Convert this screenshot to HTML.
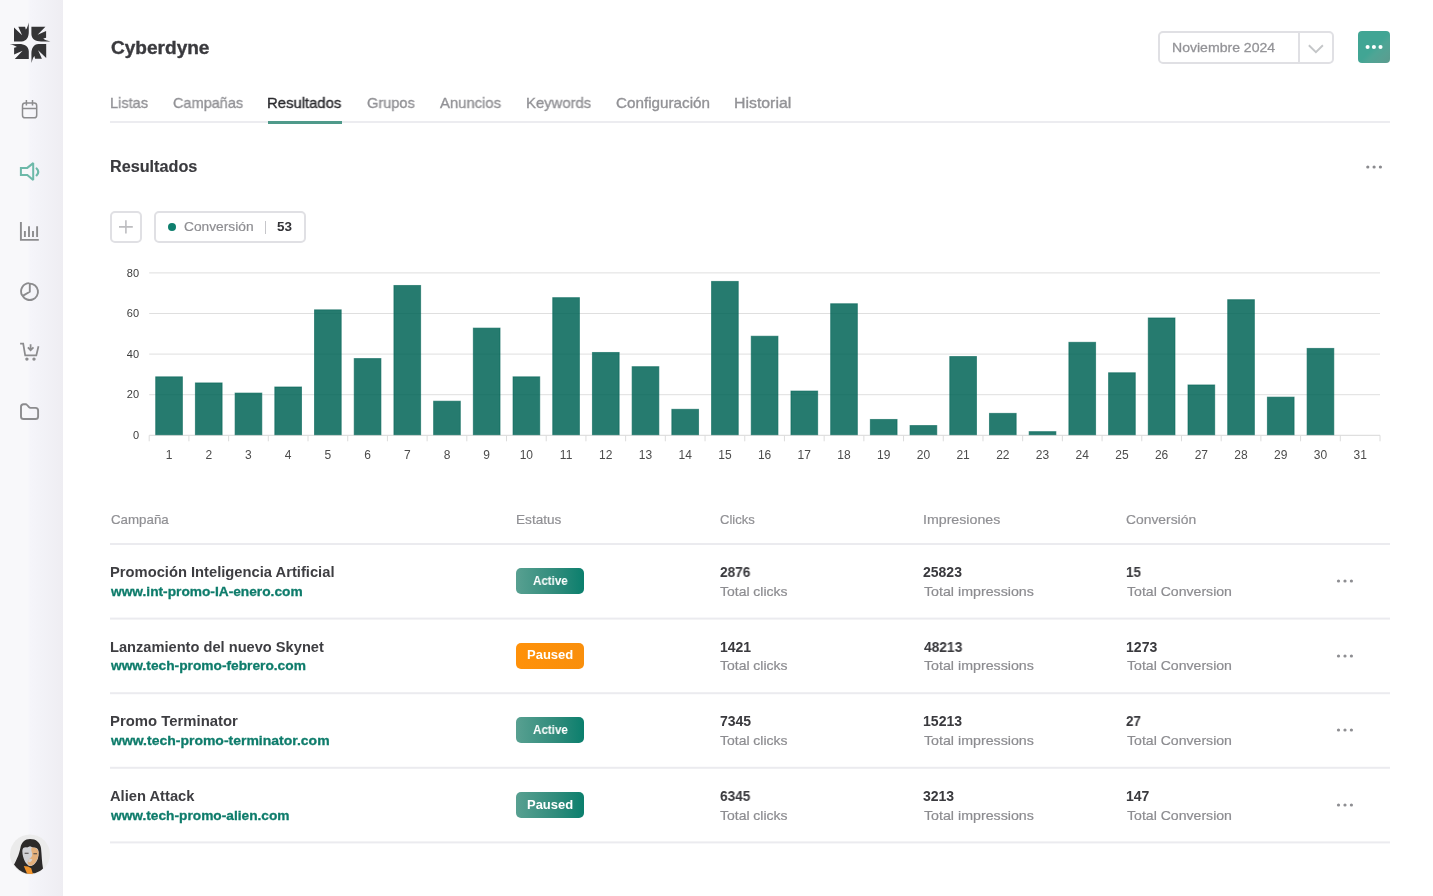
<!DOCTYPE html>
<html lang="es"><head><meta charset="utf-8"><title>Cyberdyne - Resultados</title>
<style>
html,body{margin:0;padding:0}
body{width:1433px;height:896px;position:relative;overflow:hidden;background:#fff;font-family:"Liberation Sans", sans-serif;}
.t{position:absolute;margin:0;white-space:nowrap;line-height:1;will-change:transform;transform-origin:0 0;text-decoration:none;}
.abs{position:absolute}
.side{position:absolute;left:0;top:0;width:63px;height:896px;background:linear-gradient(90deg,#f8f8fa 0,#f8f8fa 28px,#f5f5fa 30px,#eeedf2 63px);}
.hl{position:absolute;left:110px;width:1280px;height:2px;background:#ebebef}
.tabline{position:absolute;left:110px;top:121px;width:1280px;height:2px;background:#ececf0}
.tabact{position:absolute;left:268px;top:121px;width:74px;height:3px;background:#4f9a8a}
.box{position:absolute;box-sizing:border-box;border:2px solid #e0e0e4;border-radius:5px;background:#fff}
.hb{-webkit-text-stroke:0.35px #3a3a3e}
.hb2{-webkit-text-stroke:0.15px #3a3a3e}
.sb{-webkit-text-stroke:0.3px #98989c}
.rg{-webkit-text-stroke:0.2px}
.tb{-webkit-text-stroke:0.35px}
.ub{-webkit-text-stroke:0.3px #0e7c6b}
.badge{position:absolute;left:516px;width:68px;height:26px;border-radius:5px}
.badge.g{background:linear-gradient(90deg,#58a091 0%,#2f8b7b 60%,#0b7f6d 100%)}
.badge.o{background:linear-gradient(90deg,#ff9109 0%,#f98f0c 100%)}
.gbtn{position:absolute;left:1358px;top:31px;width:32px;height:32px;border-radius:4px;background:linear-gradient(135deg,#41a594 0%,#41a594 50%,#4ea595 62%,#57a092 82%,#5a9b8d 100%)}
.chart{position:absolute;left:0;top:0;will-change:transform}
</style></head><body>
<aside class="sidebar">
<div class="side"></div>
<svg class="abs" style="left:0;top:0" width="63" height="896" viewBox="0 0 63 896">
<!-- logo -->
<g transform="translate(30.1,42.8)" fill="#343436">
<g id="q"><path d="M-16.1,-15.3 L-16.1,-1.3 L-8.5,-1.3 C-3.5,-1.6 -1.3,-5.5 -1.3,-11 L-1.4,-20.3 C-2.2,-16.8 -3,-14.6 -4.3,-13.2 L-5,-16 L-11.8,-16 L-8,-7.5 Z"/></g>
<path transform="rotate(90)" d="M-16.1,-15.3 L-16.1,-1.3 L-8.5,-1.3 C-3.5,-1.6 -1.3,-5.5 -1.3,-11 L-1.4,-20.3 C-2.2,-16.8 -3,-14.6 -4.3,-13.2 L-5,-16 L-11.8,-16 L-8,-7.5 Z"/>
<path transform="rotate(180)" d="M-16.1,-15.3 L-16.1,-1.3 L-8.5,-1.3 C-3.5,-1.6 -1.3,-5.5 -1.3,-11 L-1.4,-20.3 C-2.2,-16.8 -3,-14.6 -4.3,-13.2 L-5,-16 L-11.8,-16 L-8,-7.5 Z"/>
<path transform="rotate(270)" d="M-16.1,-15.3 L-16.1,-1.3 L-8.5,-1.3 C-3.5,-1.6 -1.3,-5.5 -1.3,-11 L-1.4,-20.3 C-2.2,-16.8 -3,-14.6 -4.3,-13.2 L-5,-16 L-11.8,-16 L-8,-7.5 Z"/>
</g>
<!-- calendar -->
<g fill="none" stroke="#8c8c8e" stroke-width="1.5">
<rect x="22.5" y="103.1" width="14.2" height="14.7" rx="2.6"/>
<path d="M22.5 108.4 H36.7 M26.4 100 V105.4 M32.5 100 V105.4"/>
</g>
<!-- speaker -->
<g fill="none" stroke="#6db9a9" stroke-width="2" stroke-linejoin="round">
<path d="M20.9 167.9 H27.3 L33.2 163.1 V180 L27.3 174.9 H20.9 Z" stroke-linejoin="miter" stroke-miterlimit="2"/>
<path d="M36.6 168.5 C38.8 170.4 38.8 173.5 36.6 175.3" stroke-linecap="round" stroke-width="2.2"/>
</g>
<!-- chart icon -->
<g fill="none" stroke="#8c8c8e" stroke-width="1.9">
<path d="M20.9 222.1 V239.9 H38.8"/>
<path d="M24.9 231 V236.9 M29 226.3 V236.9 M33 231 V236.9 M37.1 226.3 V236.9"/>
</g>
<!-- pie -->
<g fill="none" stroke="#8c8c8e" stroke-width="1.9">
<path d="M29.8 283.6 A8.2 8.2 0 1 1 22.7 295.9 L29.8 291.8 Z" stroke-linejoin="round"/>
<path d="M22.2 295.4 A8.2 8.2 0 0 1 29.3 283.1" />
</g>
<!-- cart -->
<g fill="none" stroke="#8c8c8e" stroke-width="1.75">
<path d="M20.1 343.5 H23.2 L25.2 355.4 H36.3 L38.5 346.3"/>
<path d="M30.6 344.3 V350 M27.9 347.4 L30.6 350.2 L33.5 347.4"/>
</g>
<circle cx="26.9" cy="359.1" r="1.7" fill="#8c8c8e"/><circle cx="34" cy="359.1" r="1.7" fill="#8c8c8e"/>
<!-- folder -->
<path d="M23.6 404.2 H25.6 C26.3 404.2 26.7 404.5 27.1 405 L29 407.2 C29.4 407.7 29.8 407.9 30.5 407.9 H35.5 C37.1 407.9 38.1 408.9 38.1 410.5 V416.4 C38.1 418 37.1 419 35.5 419 H23.6 C22 419 21 418 21 416.4 V406.8 C21 405.2 22 404.2 23.6 404.2 Z" fill="none" stroke="#8c8c8e" stroke-width="1.9"/>
<!-- avatar -->
<defs><clipPath id="av"><circle cx="30" cy="854.4" r="20"/></clipPath></defs>
<g clip-path="url(#av)">
<rect x="9" y="833" width="42" height="43" fill="#ebebeb"/>
<path d="M30 839.1 C25 839.1 21.6 842 20.4 848 C19 855 16 861 14 864.6 C17 869 21 872 26 873.6 L35 873.2 C39 871.6 41.5 870 43 868.4 C41.8 862 41.8 855 41 848 C40.2 842.5 36 839.1 30 839.1 Z" fill="#2c2a29"/>
<path d="M22.3 851 C22.5 848 24 847 27 847.4 L30 846.2 L33 847.6 C36 847.2 38.5 848.6 38.7 852 C38.9 857 37.5 861 35 863.5 C33 865.5 31 866.3 29.5 866 C26.5 865 22.5 859 22.3 851 Z" fill="#d0d1d5"/>
<path d="M31.5 847.6 C34.5 847 38 848.4 38.5 852 C38.8 857 37 861 34.5 863.5 C33 865 31 866 29.8 865.6 C28 864.5 27 862.5 28 860.5 C29.5 858 32.5 857.5 32.2 854.5 C32 852 30.8 850 31.5 847.6 Z" fill="#e9a45e" opacity="0.75"/>
<path d="M28.5 859.5 C30 858.4 31.5 858.6 32.3 859.6 C31.6 861.6 29.8 862.6 28.3 862 Z" fill="#d6d3d2"/>
<path d="M24.6 853.3 H28.6 M33.4 853.7 H37" stroke="#4a4543" stroke-width="1.1"/>
<path d="M23.8 866 L27 873.6 L33 874.2 L31.2 868.3 L28 866.6 Z" fill="#f0932b"/>
</g>
</svg>

</aside>
<main>
<header class="page-header">
<h1 class="t hb" style="left:111px;top:40.30px;font-size:17.6px;font-weight:700;color:#3a3a3e;transform:scaleX(1.0829)">Cyberdyne</h1>
<div class="date-select">
<div class="box" style="left:1158px;top:31px;width:176px;height:33px"></div>
<div class="abs" style="left:1298px;top:32px;width:2px;height:31px;background:#e0e0e4"></div>
<svg class="abs" style="left:1306px;top:40px" width="20" height="16"><path d="M2.85 5.3 L9.9 12.1 L16.9 5.3" fill="none" stroke="#c4c6c8" stroke-width="1.9"/></svg>
<span class="t sb" style="left:1172px;top:40.60px;font-size:13px;font-weight:400;color:#909094;transform:scaleX(1.0810)">Noviembre 2024</span>
</div>
<button class="gbtn" style="border:0;padding:0"></button>
<svg class="abs" style="left:1364px;top:42px" width="20" height="10"><circle cx="3.6" cy="5" r="2.05" fill="#fff"/><circle cx="9.9" cy="5" r="2.05" fill="#fff"/><circle cx="16.5" cy="5" r="2.05" fill="#fff"/></svg>
</header>
<nav class="tabs">
<div class="tabline"></div><div class="tabact"></div>
<a class="t tb" style="left:110px;top:95.00px;font-size:15px;font-weight:400;color:#929296;transform:scaleX(0.9707)">Listas</a><a class="t tb" style="left:173px;top:95.00px;font-size:15px;font-weight:400;color:#929296;transform:scaleX(0.9669)">Campañas</a><a class="t tb" style="left:267px;top:95.00px;font-size:15px;font-weight:400;color:#2a2a2e;transform:scaleX(0.9904)">Resultados</a><a class="t tb" style="left:367px;top:95.00px;font-size:15px;font-weight:400;color:#929296;transform:scaleX(0.9711)">Grupos</a><a class="t tb" style="left:440px;top:95.00px;font-size:15px;font-weight:400;color:#929296;transform:scaleX(0.9896)">Anuncios</a><a class="t tb" style="left:526px;top:95.00px;font-size:15px;font-weight:400;color:#929296;transform:scaleX(0.9901)">Keywords</a><a class="t tb" style="left:616px;top:95.00px;font-size:15px;font-weight:400;color:#929296;transform:scaleX(1.0156)">Configuración</a><a class="t tb" style="left:734px;top:95.00px;font-size:15px;font-weight:400;color:#929296;transform:scaleX(1.0565)">Historial</a>
</nav>
<section class="results">
<h2 class="t hb2" style="left:110px;top:159.46px;font-size:16px;font-weight:700;color:#3a3a3e;transform:scaleX(1.0123)">Resultados</h2>
<svg class="abs" style="left:1364px;top:162px" width="20" height="10"><circle cx="3.8" cy="5" r="1.6" fill="#8a8a8e"/><circle cx="10.1" cy="5" r="1.6" fill="#8a8a8e"/><circle cx="16.4" cy="5" r="1.6" fill="#8a8a8e"/></svg>
<div class="filters">
<div class="box" style="left:110px;top:211px;width:32px;height:32px"></div>
<svg class="abs" style="left:116px;top:217px" width="20" height="20"><path d="M9.9 3.2 V16.6 M3 9.9 H16.8" stroke="#bdbdc0" stroke-width="1.6" fill="none"/></svg>
<div class="box" style="left:154px;top:211px;width:152px;height:32px"></div>
<div class="abs" style="left:168px;top:223px;width:8px;height:8px;border-radius:50%;background:#0e7f6e"></div>
<div class="abs" style="left:265.3px;top:221px;width:1.2px;height:12.5px;background:#c6c6ca"></div>
<span class="t rg" style="left:184px;top:219.90px;font-size:13px;font-weight:400;color:#8e8e92;transform:scaleX(1.0578)">Conversión</span><span class="t " style="left:277px;top:219.90px;font-size:13px;font-weight:700;color:#333337;transform:scaleX(1.0348)">53</span>
</div>
<svg class="chart" width="1433" height="896" viewBox="0 0 1433 896" font-family="Liberation Sans, sans-serif">
<line x1="149.2" y1="435.30" x2="1380" y2="435.30" stroke="#d8d8d8" stroke-width="1"/>
<text x="139.1" y="439" font-size="11" fill="#3c3c3c" text-anchor="end">0</text>
<line x1="149.2" y1="394.70" x2="1380" y2="394.70" stroke="#dfdfdf" stroke-width="1"/>
<text x="139.1" y="398" font-size="11" fill="#3c3c3c" text-anchor="end">20</text>
<line x1="149.2" y1="354.10" x2="1380" y2="354.10" stroke="#dfdfdf" stroke-width="1"/>
<text x="139.1" y="358" font-size="11" fill="#3c3c3c" text-anchor="end">40</text>
<line x1="149.2" y1="313.50" x2="1380" y2="313.50" stroke="#dfdfdf" stroke-width="1"/>
<text x="139.1" y="317" font-size="11" fill="#3c3c3c" text-anchor="end">60</text>
<line x1="149.2" y1="272.90" x2="1380" y2="272.90" stroke="#dfdfdf" stroke-width="1"/>
<text x="139.1" y="277" font-size="11" fill="#3c3c3c" text-anchor="end">80</text>
<line x1="149.20" y1="435.3" x2="149.20" y2="441.3" stroke="#dcdcdc" stroke-width="1"/>
<line x1="188.90" y1="435.3" x2="188.90" y2="441.3" stroke="#dcdcdc" stroke-width="1"/>
<line x1="228.61" y1="435.3" x2="228.61" y2="441.3" stroke="#dcdcdc" stroke-width="1"/>
<line x1="268.31" y1="435.3" x2="268.31" y2="441.3" stroke="#dcdcdc" stroke-width="1"/>
<line x1="308.01" y1="435.3" x2="308.01" y2="441.3" stroke="#dcdcdc" stroke-width="1"/>
<line x1="347.72" y1="435.3" x2="347.72" y2="441.3" stroke="#dcdcdc" stroke-width="1"/>
<line x1="387.42" y1="435.3" x2="387.42" y2="441.3" stroke="#dcdcdc" stroke-width="1"/>
<line x1="427.12" y1="435.3" x2="427.12" y2="441.3" stroke="#dcdcdc" stroke-width="1"/>
<line x1="466.83" y1="435.3" x2="466.83" y2="441.3" stroke="#dcdcdc" stroke-width="1"/>
<line x1="506.53" y1="435.3" x2="506.53" y2="441.3" stroke="#dcdcdc" stroke-width="1"/>
<line x1="546.23" y1="435.3" x2="546.23" y2="441.3" stroke="#dcdcdc" stroke-width="1"/>
<line x1="585.94" y1="435.3" x2="585.94" y2="441.3" stroke="#dcdcdc" stroke-width="1"/>
<line x1="625.64" y1="435.3" x2="625.64" y2="441.3" stroke="#dcdcdc" stroke-width="1"/>
<line x1="665.34" y1="435.3" x2="665.34" y2="441.3" stroke="#dcdcdc" stroke-width="1"/>
<line x1="705.05" y1="435.3" x2="705.05" y2="441.3" stroke="#dcdcdc" stroke-width="1"/>
<line x1="744.75" y1="435.3" x2="744.75" y2="441.3" stroke="#dcdcdc" stroke-width="1"/>
<line x1="784.45" y1="435.3" x2="784.45" y2="441.3" stroke="#dcdcdc" stroke-width="1"/>
<line x1="824.15" y1="435.3" x2="824.15" y2="441.3" stroke="#dcdcdc" stroke-width="1"/>
<line x1="863.86" y1="435.3" x2="863.86" y2="441.3" stroke="#dcdcdc" stroke-width="1"/>
<line x1="903.56" y1="435.3" x2="903.56" y2="441.3" stroke="#dcdcdc" stroke-width="1"/>
<line x1="943.26" y1="435.3" x2="943.26" y2="441.3" stroke="#dcdcdc" stroke-width="1"/>
<line x1="982.97" y1="435.3" x2="982.97" y2="441.3" stroke="#dcdcdc" stroke-width="1"/>
<line x1="1022.67" y1="435.3" x2="1022.67" y2="441.3" stroke="#dcdcdc" stroke-width="1"/>
<line x1="1062.37" y1="435.3" x2="1062.37" y2="441.3" stroke="#dcdcdc" stroke-width="1"/>
<line x1="1102.08" y1="435.3" x2="1102.08" y2="441.3" stroke="#dcdcdc" stroke-width="1"/>
<line x1="1141.78" y1="435.3" x2="1141.78" y2="441.3" stroke="#dcdcdc" stroke-width="1"/>
<line x1="1181.48" y1="435.3" x2="1181.48" y2="441.3" stroke="#dcdcdc" stroke-width="1"/>
<line x1="1221.19" y1="435.3" x2="1221.19" y2="441.3" stroke="#dcdcdc" stroke-width="1"/>
<line x1="1260.89" y1="435.3" x2="1260.89" y2="441.3" stroke="#dcdcdc" stroke-width="1"/>
<line x1="1300.59" y1="435.3" x2="1300.59" y2="441.3" stroke="#dcdcdc" stroke-width="1"/>
<line x1="1340.30" y1="435.3" x2="1340.30" y2="441.3" stroke="#dcdcdc" stroke-width="1"/>
<line x1="1380.00" y1="435.3" x2="1380.00" y2="441.3" stroke="#dcdcdc" stroke-width="1"/>
<text x="169.05" y="458.7" font-size="12" fill="#4c4c4c" text-anchor="middle">1</text>
<rect x="155.70" y="376.83" width="26.7" height="57.87" fill="rgba(0,100,86,0.85)" stroke="rgba(0,100,86,0.6)" stroke-width="1"/>
<text x="208.75" y="458.7" font-size="12" fill="#4c4c4c" text-anchor="middle">2</text>
<rect x="195.40" y="382.92" width="26.7" height="51.78" fill="rgba(0,100,86,0.85)" stroke="rgba(0,100,86,0.6)" stroke-width="1"/>
<text x="248.46" y="458.7" font-size="12" fill="#4c4c4c" text-anchor="middle">3</text>
<rect x="235.11" y="393.07" width="26.7" height="41.63" fill="rgba(0,100,86,0.85)" stroke="rgba(0,100,86,0.6)" stroke-width="1"/>
<text x="288.16" y="458.7" font-size="12" fill="#4c4c4c" text-anchor="middle">4</text>
<rect x="274.81" y="386.98" width="26.7" height="47.72" fill="rgba(0,100,86,0.85)" stroke="rgba(0,100,86,0.6)" stroke-width="1"/>
<text x="327.86" y="458.7" font-size="12" fill="#4c4c4c" text-anchor="middle">5</text>
<rect x="314.51" y="309.84" width="26.7" height="124.86" fill="rgba(0,100,86,0.85)" stroke="rgba(0,100,86,0.6)" stroke-width="1"/>
<text x="367.57" y="458.7" font-size="12" fill="#4c4c4c" text-anchor="middle">6</text>
<rect x="354.22" y="358.56" width="26.7" height="76.14" fill="rgba(0,100,86,0.85)" stroke="rgba(0,100,86,0.6)" stroke-width="1"/>
<text x="407.27" y="458.7" font-size="12" fill="#4c4c4c" text-anchor="middle">7</text>
<rect x="393.92" y="285.48" width="26.7" height="149.22" fill="rgba(0,100,86,0.85)" stroke="rgba(0,100,86,0.6)" stroke-width="1"/>
<text x="446.97" y="458.7" font-size="12" fill="#4c4c4c" text-anchor="middle">8</text>
<rect x="433.62" y="401.19" width="26.7" height="33.51" fill="rgba(0,100,86,0.85)" stroke="rgba(0,100,86,0.6)" stroke-width="1"/>
<text x="486.68" y="458.7" font-size="12" fill="#4c4c4c" text-anchor="middle">9</text>
<rect x="473.33" y="328.11" width="26.7" height="106.59" fill="rgba(0,100,86,0.85)" stroke="rgba(0,100,86,0.6)" stroke-width="1"/>
<text x="526.38" y="458.7" font-size="12" fill="#4c4c4c" text-anchor="middle">10</text>
<rect x="513.03" y="376.83" width="26.7" height="57.87" fill="rgba(0,100,86,0.85)" stroke="rgba(0,100,86,0.6)" stroke-width="1"/>
<text x="566.08" y="458.7" font-size="12" fill="#4c4c4c" text-anchor="middle">11</text>
<rect x="552.73" y="297.66" width="26.7" height="137.04" fill="rgba(0,100,86,0.85)" stroke="rgba(0,100,86,0.6)" stroke-width="1"/>
<text x="605.79" y="458.7" font-size="12" fill="#4c4c4c" text-anchor="middle">12</text>
<rect x="592.44" y="352.47" width="26.7" height="82.23" fill="rgba(0,100,86,0.85)" stroke="rgba(0,100,86,0.6)" stroke-width="1"/>
<text x="645.49" y="458.7" font-size="12" fill="#4c4c4c" text-anchor="middle">13</text>
<rect x="632.14" y="366.68" width="26.7" height="68.02" fill="rgba(0,100,86,0.85)" stroke="rgba(0,100,86,0.6)" stroke-width="1"/>
<text x="685.19" y="458.7" font-size="12" fill="#4c4c4c" text-anchor="middle">14</text>
<rect x="671.84" y="409.31" width="26.7" height="25.39" fill="rgba(0,100,86,0.85)" stroke="rgba(0,100,86,0.6)" stroke-width="1"/>
<text x="724.90" y="458.7" font-size="12" fill="#4c4c4c" text-anchor="middle">15</text>
<rect x="711.55" y="281.42" width="26.7" height="153.28" fill="rgba(0,100,86,0.85)" stroke="rgba(0,100,86,0.6)" stroke-width="1"/>
<text x="764.60" y="458.7" font-size="12" fill="#4c4c4c" text-anchor="middle">16</text>
<rect x="751.25" y="336.23" width="26.7" height="98.47" fill="rgba(0,100,86,0.85)" stroke="rgba(0,100,86,0.6)" stroke-width="1"/>
<text x="804.30" y="458.7" font-size="12" fill="#4c4c4c" text-anchor="middle">17</text>
<rect x="790.95" y="391.04" width="26.7" height="43.66" fill="rgba(0,100,86,0.85)" stroke="rgba(0,100,86,0.6)" stroke-width="1"/>
<text x="844.01" y="458.7" font-size="12" fill="#4c4c4c" text-anchor="middle">18</text>
<rect x="830.66" y="303.75" width="26.7" height="130.95" fill="rgba(0,100,86,0.85)" stroke="rgba(0,100,86,0.6)" stroke-width="1"/>
<text x="883.71" y="458.7" font-size="12" fill="#4c4c4c" text-anchor="middle">19</text>
<rect x="870.36" y="419.46" width="26.7" height="15.24" fill="rgba(0,100,86,0.85)" stroke="rgba(0,100,86,0.6)" stroke-width="1"/>
<text x="923.41" y="458.7" font-size="12" fill="#4c4c4c" text-anchor="middle">20</text>
<rect x="910.06" y="425.55" width="26.7" height="9.15" fill="rgba(0,100,86,0.85)" stroke="rgba(0,100,86,0.6)" stroke-width="1"/>
<text x="963.12" y="458.7" font-size="12" fill="#4c4c4c" text-anchor="middle">21</text>
<rect x="949.77" y="356.53" width="26.7" height="78.17" fill="rgba(0,100,86,0.85)" stroke="rgba(0,100,86,0.6)" stroke-width="1"/>
<text x="1002.82" y="458.7" font-size="12" fill="#4c4c4c" text-anchor="middle">22</text>
<rect x="989.47" y="413.37" width="26.7" height="21.33" fill="rgba(0,100,86,0.85)" stroke="rgba(0,100,86,0.6)" stroke-width="1"/>
<text x="1042.52" y="458.7" font-size="12" fill="#4c4c4c" text-anchor="middle">23</text>
<rect x="1029.17" y="431.64" width="26.7" height="3.06" fill="rgba(0,100,86,0.85)" stroke="rgba(0,100,86,0.6)" stroke-width="1"/>
<text x="1082.23" y="458.7" font-size="12" fill="#4c4c4c" text-anchor="middle">24</text>
<rect x="1068.88" y="342.32" width="26.7" height="92.38" fill="rgba(0,100,86,0.85)" stroke="rgba(0,100,86,0.6)" stroke-width="1"/>
<text x="1121.93" y="458.7" font-size="12" fill="#4c4c4c" text-anchor="middle">25</text>
<rect x="1108.58" y="372.77" width="26.7" height="61.93" fill="rgba(0,100,86,0.85)" stroke="rgba(0,100,86,0.6)" stroke-width="1"/>
<text x="1161.63" y="458.7" font-size="12" fill="#4c4c4c" text-anchor="middle">26</text>
<rect x="1148.28" y="317.96" width="26.7" height="116.74" fill="rgba(0,100,86,0.85)" stroke="rgba(0,100,86,0.6)" stroke-width="1"/>
<text x="1201.34" y="458.7" font-size="12" fill="#4c4c4c" text-anchor="middle">27</text>
<rect x="1187.99" y="384.95" width="26.7" height="49.75" fill="rgba(0,100,86,0.85)" stroke="rgba(0,100,86,0.6)" stroke-width="1"/>
<text x="1241.04" y="458.7" font-size="12" fill="#4c4c4c" text-anchor="middle">28</text>
<rect x="1227.69" y="299.69" width="26.7" height="135.01" fill="rgba(0,100,86,0.85)" stroke="rgba(0,100,86,0.6)" stroke-width="1"/>
<text x="1280.74" y="458.7" font-size="12" fill="#4c4c4c" text-anchor="middle">29</text>
<rect x="1267.39" y="397.13" width="26.7" height="37.57" fill="rgba(0,100,86,0.85)" stroke="rgba(0,100,86,0.6)" stroke-width="1"/>
<text x="1320.45" y="458.7" font-size="12" fill="#4c4c4c" text-anchor="middle">30</text>
<rect x="1307.10" y="348.41" width="26.7" height="86.29" fill="rgba(0,100,86,0.85)" stroke="rgba(0,100,86,0.6)" stroke-width="1"/>
<text x="1360.15" y="458.7" font-size="12" fill="#4c4c4c" text-anchor="middle">31</text>
</svg>
</section>
<section class="campaigns">
<svg class="abs" style="left:0;top:0" width="1433" height="896"><rect x="110" y="543.00" width="1280" height="2" fill="#ebebef"/><rect x="110" y="617.60" width="1280" height="2" fill="#ebebef"/><rect x="110" y="692.20" width="1280" height="2" fill="#ebebef"/><rect x="110" y="766.80" width="1280" height="2" fill="#ebebef"/><rect x="110" y="841.40" width="1280" height="2" fill="#ebebef"/></svg>
<div class="thead"><span class="t rg" style="left:111px;top:513.00px;font-size:13px;font-weight:400;color:#909094;transform:scaleX(1.0238)">Campaña</span><span class="t rg" style="left:516px;top:513.00px;font-size:13px;font-weight:400;color:#909094;transform:scaleX(1.0468)">Estatus</span><span class="t rg" style="left:720px;top:513.00px;font-size:13px;font-weight:400;color:#909094;transform:scaleX(1.0033)">Clicks</span><span class="t rg" style="left:923px;top:513.00px;font-size:13px;font-weight:400;color:#909094;transform:scaleX(1.0910)">Impresiones</span><span class="t rg" style="left:1126px;top:513.00px;font-size:13px;font-weight:400;color:#909094;transform:scaleX(1.0659)">Conversión</span></div>
<div class="trow"><div class="badge g" style="top:568.00px"></div><span class="t " style="left:110px;top:565.15px;font-size:14px;font-weight:700;color:#3e3e42;transform:scaleX(1.0519)">Promoción Inteligencia Artificial</span><a class="t ub" style="left:111px;top:584.80px;font-size:13px;font-weight:700;color:#0e7c6b;transform:scaleX(1.0555)">www.int-promo-IA-enero.com</a><span class="t " style="left:720px;top:565.15px;font-size:14px;font-weight:700;color:#3a3a3e;transform:scaleX(0.9780)">2876</span><span class="t rg" style="left:720px;top:584.80px;font-size:13px;font-weight:400;color:#8c8c90;transform:scaleX(1.0741)">Total clicks</span><span class="t " style="left:923px;top:565.15px;font-size:14px;font-weight:700;color:#3a3a3e;transform:scaleX(0.9897)">25823</span><span class="t rg" style="left:924px;top:584.80px;font-size:13px;font-weight:400;color:#8c8c90;transform:scaleX(1.0937)">Total impressions</span><span class="t " style="left:1126px;top:565.15px;font-size:14px;font-weight:700;color:#3a3a3e;transform:scaleX(0.9610)">15</span><span class="t rg" style="left:1127px;top:584.80px;font-size:13px;font-weight:400;color:#8c8c90;transform:scaleX(1.0837)">Total Conversion</span><span class="t " style="left:533px;top:574.84px;font-size:12px;font-weight:700;color:#ffffff;transform:scaleX(0.9636)">Active</span><svg class="abs" style="left:1335px;top:575.90px" width="20" height="10"><circle cx="3.5" cy="5" r="1.6" fill="#8e8e92"/><circle cx="10" cy="5" r="1.6" fill="#8e8e92"/><circle cx="16.4" cy="5" r="1.6" fill="#8e8e92"/></svg></div>
<div class="trow"><div class="badge o" style="top:642.65px"></div><span class="t " style="left:110px;top:639.80px;font-size:14px;font-weight:700;color:#3e3e42;transform:scaleX(1.0451)">Lanzamiento del nuevo Skynet</span><a class="t ub" style="left:111px;top:659.45px;font-size:13px;font-weight:700;color:#0e7c6b;transform:scaleX(1.0566)">www.tech-promo-febrero.com</a><span class="t " style="left:720px;top:639.80px;font-size:14px;font-weight:700;color:#3a3a3e;transform:scaleX(0.9942)">1421</span><span class="t rg" style="left:720px;top:659.45px;font-size:13px;font-weight:400;color:#8c8c90;transform:scaleX(1.0741)">Total clicks</span><span class="t " style="left:924px;top:639.80px;font-size:14px;font-weight:700;color:#3a3a3e;transform:scaleX(0.9838)">48213</span><span class="t rg" style="left:924px;top:659.45px;font-size:13px;font-weight:400;color:#8c8c90;transform:scaleX(1.0937)">Total impressions</span><span class="t " style="left:1126px;top:639.80px;font-size:14px;font-weight:700;color:#3a3a3e;transform:scaleX(1.0034)">1273</span><span class="t rg" style="left:1127px;top:659.45px;font-size:13px;font-weight:400;color:#8c8c90;transform:scaleX(1.0837)">Total Conversion</span><span class="t " style="left:527px;top:649.49px;font-size:12px;font-weight:700;color:#ffffff;transform:scaleX(1.0838)">Paused</span><svg class="abs" style="left:1335px;top:650.55px" width="20" height="10"><circle cx="3.5" cy="5" r="1.6" fill="#8e8e92"/><circle cx="10" cy="5" r="1.6" fill="#8e8e92"/><circle cx="16.4" cy="5" r="1.6" fill="#8e8e92"/></svg></div>
<div class="trow"><div class="badge g" style="top:717.30px"></div><span class="t " style="left:110px;top:714.45px;font-size:14px;font-weight:700;color:#3e3e42;transform:scaleX(1.0623)">Promo Terminator</span><a class="t ub" style="left:111px;top:734.10px;font-size:13px;font-weight:700;color:#0e7c6b;transform:scaleX(1.0756)">www.tech-promo-terminator.com</a><span class="t " style="left:720px;top:714.45px;font-size:14px;font-weight:700;color:#3a3a3e;transform:scaleX(0.9902)">7345</span><span class="t rg" style="left:720px;top:734.10px;font-size:13px;font-weight:400;color:#8c8c90;transform:scaleX(1.0741)">Total clicks</span><span class="t " style="left:923px;top:714.45px;font-size:14px;font-weight:700;color:#3a3a3e;transform:scaleX(1.0043)">15213</span><span class="t rg" style="left:924px;top:734.10px;font-size:13px;font-weight:400;color:#8c8c90;transform:scaleX(1.0937)">Total impressions</span><span class="t " style="left:1126px;top:714.45px;font-size:14px;font-weight:700;color:#3a3a3e;transform:scaleX(0.9565)">27</span><span class="t rg" style="left:1127px;top:734.10px;font-size:13px;font-weight:400;color:#8c8c90;transform:scaleX(1.0837)">Total Conversion</span><span class="t " style="left:533px;top:724.14px;font-size:12px;font-weight:700;color:#ffffff;transform:scaleX(0.9689)">Active</span><svg class="abs" style="left:1335px;top:725.20px" width="20" height="10"><circle cx="3.5" cy="5" r="1.6" fill="#8e8e92"/><circle cx="10" cy="5" r="1.6" fill="#8e8e92"/><circle cx="16.4" cy="5" r="1.6" fill="#8e8e92"/></svg></div>
<div class="trow"><div class="badge g" style="top:791.95px"></div><span class="t " style="left:110px;top:789.10px;font-size:14px;font-weight:700;color:#3e3e42;transform:scaleX(1.0506)">Alien Attack</span><a class="t ub" style="left:111px;top:808.75px;font-size:13px;font-weight:700;color:#0e7c6b;transform:scaleX(1.0548)">www.tech-promo-alien.com</a><span class="t " style="left:720px;top:789.10px;font-size:14px;font-weight:700;color:#3a3a3e;transform:scaleX(0.9767)">6345</span><span class="t rg" style="left:720px;top:808.75px;font-size:13px;font-weight:400;color:#8c8c90;transform:scaleX(1.0741)">Total clicks</span><span class="t " style="left:923px;top:789.10px;font-size:14px;font-weight:700;color:#3a3a3e;transform:scaleX(0.9894)">3213</span><span class="t rg" style="left:924px;top:808.75px;font-size:13px;font-weight:400;color:#8c8c90;transform:scaleX(1.0937)">Total impressions</span><span class="t " style="left:1126px;top:789.10px;font-size:14px;font-weight:700;color:#3a3a3e;transform:scaleX(0.9984)">147</span><span class="t rg" style="left:1127px;top:808.75px;font-size:13px;font-weight:400;color:#8c8c90;transform:scaleX(1.0837)">Total Conversion</span><span class="t " style="left:527px;top:798.79px;font-size:12px;font-weight:700;color:#ffffff;transform:scaleX(1.0809)">Paused</span><svg class="abs" style="left:1335px;top:799.85px" width="20" height="10"><circle cx="3.5" cy="5" r="1.6" fill="#8e8e92"/><circle cx="10" cy="5" r="1.6" fill="#8e8e92"/><circle cx="16.4" cy="5" r="1.6" fill="#8e8e92"/></svg></div>

</section>
</main>
</body></html>
